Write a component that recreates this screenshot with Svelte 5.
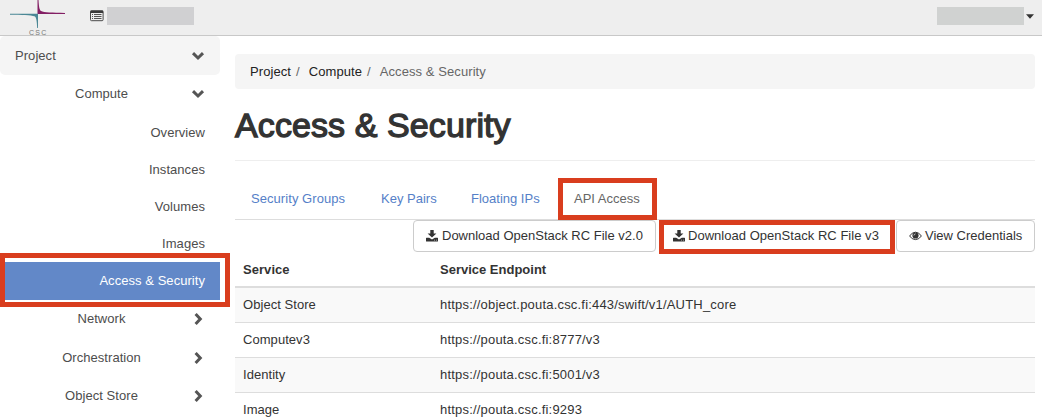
<script>
  const pages = ['Overview', 'Instances', 'Volumes', 'Images', 'Access & Security'];
  const groups = ['Network', 'Orchestration', 'Object Store'];
  const tabs = ['Security Groups', 'Key Pairs', 'Floating IPs', 'API Access'];
  const rows = [
    ['Object Store', 'https://object.pouta.csc.fi:443/swift/v1/AUTH_core'],
    ['Computev3', 'https://pouta.csc.fi:8777/v3'],
    ['Identity', 'https://pouta.csc.fi:5001/v3'],
    ['Image', 'https://pouta.csc.fi:9293']
  ];
</script>

{#snippet down()}
  <svg class="chev" width="14" height="14" viewBox="0 0 14 14"><path d="M2 4.200 L7 9 L12 4.200" /></svg>
{/snippet}
{#snippet right()}
  <svg class="chev" width="14" height="14" viewBox="0 0 14 14"><path d="M4.600 2 L9.300 7 L4.600 12" /></svg>
{/snippet}
{#snippet download()}
  <svg class="ic" width="12" height="12" viewBox="0 0 12 12">
    <path d="M4.300 0h3.400v3.400h2.700L6 7.600 1.600 3.400h2.700z" />
    <path fill-rule="evenodd" d="M.5 7.700h2.700L6 9.500l2.800-1.800h2.700q.5 0 .5.5v2.800q0 .6-.6.6H.6q-.6 0-.6-.6V8.200q0-.5.5-.5zM8.200 9.800v.7h.7v-.7zM10.200 9.800v.7h.7v-.7z" />
  </svg>
{/snippet}

<div class="page">
  <header>
    <svg class="logo" width="56" height="36" viewBox="0 0 56 36">
      <path fill="#831f64" d="M27.500 0h1c.4 6 .7 9.600 2.500 11.100C34 12.600 42 12.600 55 13.100v.9H27.500z" />
      <path fill="#4a8795" d="M0 13.700h28V28h-.8c-.4-7-.7-10.500-2.700-11.700C21 14.900 12 15 0 14.700z" />
      <text x="19" y="34.900" font-size="7" letter-spacing="1.300" fill="#777">CSC</text>
    </svg>
    <svg class="list" width="14" height="12" viewBox="0 0 14 12">
      <rect x=".5" y=".9" width="12.600" height="9.800" rx="1" fill="#eee" stroke="#4a4a4a" />
      <path fill="#3a3a3a" d="M.5.5h12.600V3H.5z" />
      <path fill="#555" d="M2 4h1v1H2zM2 6h1v1H2zM2 8h1v1H2zM4 4h7.500v1H4zM4 6h7.500v1H4zM4 8h7.500v1H4z" />
    </svg>
    <span class="mask"></span>
    <span class="mask user"></span>
    <svg class="caret" width="8" height="5" viewBox="0 0 8 5"><path fill="#333" d="M0 .3h8L4 4.700z" /></svg>
  </header>

  <div class="body">
    <nav>
      <div class="top"><span>Project</span>{@render down()}</div>
      <div class="group"><span>Compute</span>{@render down()}</div>
      {#each pages as page, i}
        <div class="leaf" class:first={i === 0} class:active={i === 4}><span>{page}</span></div>
      {/each}
      {#each groups as group}
        <div class="group sub"><span>{group}</span>{@render right()}</div>
      {/each}
    </nav>

    <main>
      <div class="crumbs">
        <span>Project</span><i>/</i><span>Compute</span><i>/</i><span class="here">Access &amp; Security</span>
      </div>
      <h1>Access &amp; Security</h1>
      <div class="tabs">
        {#each tabs as tab, i}
          <span class="tab t{i}" class:current={i === 3}>{tab}</span>
        {/each}
      </div>
      <div class="actions">
        <button class="b1">{@render download()}<span>Download OpenStack RC File v2.0</span></button>
        <button class="b2">{@render download()}<span>Download OpenStack RC File v3</span></button>
        <button class="b3">
          <svg class="ic eye" width="13" height="12" viewBox="0 0 13 12">
            <path fill="none" stroke="#333" stroke-width="1" d="M.6 6Q3 2.200 6.500 2.200T12.400 6Q10 9.600 6.500 9.600T.6 6z" />
            <circle cx="6.500" cy="5.500" r="3.100" />
            <path fill="none" stroke="#fff" stroke-width=".7" d="M4.900 5.500Q5 4 6.500 3.900" />
          </svg><span>View Credentials</span>
        </button>
      </div>
      <div class="row head"><span>Service</span><span>Service Endpoint</span></div>
      {#each rows as row, i}
        <div class="row" class:striped={i % 2 === 0}><span>{row[0]}</span><span class="url">{row[1]}</span></div>
      {/each}
    </main>
  </div>
</div>

<style>
  :global(body) { background: #fff; overflow: hidden; }
  .page { width: 1042px; height: 420px; overflow: hidden; font: 13px/18px "Liberation Sans", Arial, sans-serif; color: #333; }
  header { box-sizing: border-box; height: 36px; background: #eee; border-bottom: 1px solid #c8c8c8; display: flex; align-items: flex-start; }
  .logo { margin-left: 10px; flex: none; }
  .list { margin: 10px 0 0 24px; }
  .mask { width: 87px; height: 18px; margin: 7px 0 0 3px; background: #d0d0d2; }
  .user { margin-left: auto; background: #d0d2d1; }
  .caret { margin: 14px 8px 0 2px; }
  .body { display: flex; }
  nav { width: 220px; margin-right: 15px; color: #4d4d4d; flex: none; letter-spacing: .05px; }
  nav > div { box-sizing: border-box; height: 38px; display: flex; align-items: center; justify-content: space-between; padding-right: 15px; }
  nav > .top { height: 39px; background: #f5f5f5; border-radius: 5px; padding-left: 15px; }
  .group span { width: 203px; text-align: center; margin-right: -24px; }
  nav > .sub { height: 38.400px; }
  .chev { fill: none; stroke: #555; stroke-width: 3; flex: none; }
  nav .leaf { height: 37px; justify-content: flex-end; }
  nav .first { height: 38px; padding-top: 1px; }
  nav .active { height: 38px; background: #6288c8; color: #fff; position: relative; }
  .active::after { content: ""; position: absolute; left: 0; top: -9px; width: 220px; height: 44px; border: 5px solid #d93d1e; }
  main { width: 800px; padding-top: 18px; }
  .crumbs { height: 35px; background: #f5f5f5; border-radius: 4px; display: flex; align-items: center; padding-left: 15px; color: #222; letter-spacing: .08px; }
  .crumbs i { font-style: normal; color: #666; margin: 0 9px 0 5px; }
  .here { color: #666; }
  h1 { margin: 0; box-sizing: border-box; height: 72px; padding-top: 16px; border-bottom: 1px solid #eee; font-size: 34px; line-height: 40px; font-weight: 400; letter-spacing: .1px; -webkit-text-stroke: 1.300px #333; }
  .tabs { box-sizing: border-box; height: 59px; border-bottom: 1px solid #ddd; display: flex; padding: 29px 0 0 16px; color: #5580c8; }
  .t0 { width: 130px; letter-spacing: .06px; }
  .t1 { width: 90px; }
  .t2 { width: 103px; }
  .current { color: #666; position: relative; }
  .current::after { content: ""; position: absolute; left: -16px; top: -12px; width: 89px; height: 32px; border: 5px solid #d93d1e; }
  .actions { display: flex; justify-content: flex-end; height: 32px; }
  button { box-sizing: border-box; font: inherit; color: #333; background: #fff; border: 1px solid #ccc; border-radius: 4px; padding: 0 0 0 12px; display: flex; align-items: center; white-space: nowrap; height: 32px; }
  .ic { fill: #333; margin: -1px 4px 0 0; flex: none; }
  .b1 { width: 243px; margin-right: 4px; }
  .b2 { width: 234px; margin-right: 2px; position: relative; letter-spacing: .03px; }
  .b2 .ic, .b3 .ic { margin-right: 3px; }
  .b2::after { content: ""; position: absolute; left: -2px; top: -1px; width: 226px; height: 24px; border: 5px solid #d93d1e; }
  .b3 { width: 139px; padding-left: 12px; }
  .row { box-sizing: border-box; height: 35px; border-bottom: 1px solid #ddd; display: flex; align-items: center; padding-left: 8px; }
  .row span:first-child { width: 197px; letter-spacing: .05px; }
  .row .url { letter-spacing: .19px; }
  .striped { background: #f9f9f9; }
  .row.head { height: 36px; border-bottom: 2px solid #ddd; font-weight: 700; padding-top: 1px; }
  .row:last-child { border-color: transparent; }
</style>
